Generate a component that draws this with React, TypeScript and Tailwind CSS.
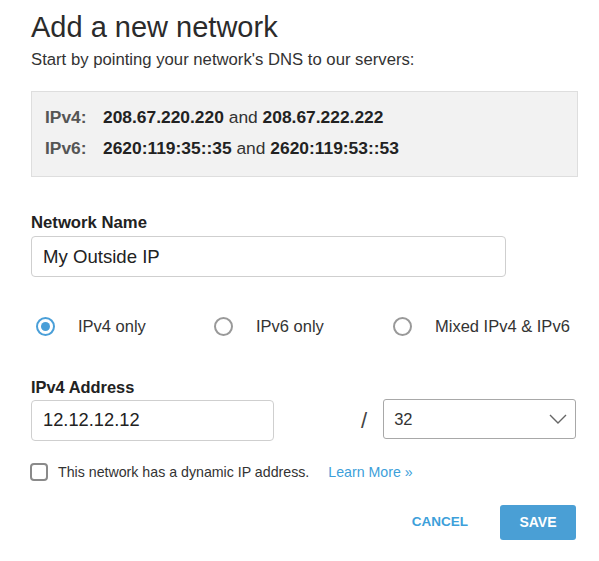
import React, { useState } from "react";

const App: React.FC = () => {
  const [mode, setMode] = useState("ipv4");
  const [dynamic, setDynamic] = useState(false);

  const modes = [
    { id: "ipv4", label: "IPv4 only", w: "w-[178px]" },
    { id: "ipv6", label: "IPv6 only", w: "w-[179px]" },
    { id: "mixed", label: "Mixed IPv4 & IPv6", w: "" },
  ];

  return (
    <div className="w-[599px] h-[561px] bg-white pl-[31px] pr-[21px] pt-[8px] text-[#333] font-['Liberation_Sans',Arial,sans-serif]">
      {/* Header */}
      <h1 className="text-[29px] leading-[38px] text-[#2b2b2b]">Add a new network</h1>
      <p className="text-[16.7px] leading-[20px] mt-[4px] text-[#333]">
        Start by pointing your network's DNS to our servers:
      </p>

      {/* DNS box */}
      <div className="mt-[21px] h-[86px] bg-[#f2f2f2] border border-[#dedede] pl-[13px] pt-[15px] text-[17.4px] leading-[21px]">
        <div className="flex">
          <span className="w-[58px] font-bold text-[#555]">IPv4:</span>
          <span>
            <b className="text-[#222]">208.67.220.220</b> and <b className="text-[#222]">208.67.222.222</b>
          </span>
        </div>
        <div className="flex mt-[10px]">
          <span className="w-[58px] font-bold text-[#555]">IPv6:</span>
          <span>
            <b className="text-[#222]">2620:119:35::35</b> and <b className="text-[#222]">2620:119:53::53</b>
          </span>
        </div>
      </div>

      {/* Network name */}
      <label className="block mt-[36px] text-[16.7px] leading-[20px] font-bold text-[#222]">Network Name</label>
      <input
        defaultValue="My Outside IP"
        className="mt-[3px] w-[475px] h-[41px] border border-[#cfcfcf] rounded-[4px] px-[11px] text-[18.6px] text-[#222] outline-none"
      />

      {/* Radios */}
      <div className="flex items-center mt-[37px] pl-[5px]">
        {modes.map((m) => (
          <button
            key={m.id}
            onClick={() => setMode(m.id)}
            className={`flex items-center gap-[23px] text-[16.5px] text-[#333] ${m.w}`}
          >
            {mode === m.id ? (
              <span className="w-[19px] h-[19px] rounded-full border-[2px] border-[#4a9fd8] flex items-center justify-center">
                <span className="w-[9px] h-[9px] rounded-full bg-[#4a9fd8]" />
              </span>
            ) : (
              <span className="w-[19px] h-[19px] rounded-full border-[2px] border-[#999]" />
            )}
            {m.label}
          </button>
        ))}
      </div>

      {/* IPv4 address */}
      <label className="block mt-[38px] text-[16.4px] leading-[20px] font-bold text-[#222]">IPv4 Address</label>
      <div className="flex items-center mt-[3px]">
        <input
          defaultValue="12.12.12.12"
          className="w-[243px] h-[41px] border border-[#cfcfcf] rounded-[4px] px-[11px] text-[18.3px] text-[#222] outline-none"
        />
        <span className="ml-[87px] text-[22px] text-[#444]">/</span>
        <div className="ml-[16px] w-[193px] h-[40px] border border-[#a8a8a8] rounded-[3px] flex items-center justify-between pl-[10px] pr-[8px] text-[16.5px] text-[#333] -mt-[2px]">
          <span>32</span>
          <svg width="18" height="10" viewBox="0 0 18 10" fill="none">
            <path d="M1 1l8 8 8-8" stroke="#666" strokeWidth="1.4" />
          </svg>
        </div>
      </div>

      {/* Dynamic IP */}
      <div className="flex items-center mt-[21px] text-[14.2px]">
        <button
          onClick={() => setDynamic(!dynamic)}
          className={`w-[18px] h-[18px] -ml-[1px] rounded-[4px] border-[2px] border-[#8a8a8a] ${dynamic ? "bg-[#4a9fd8]" : "bg-white"}`}
        />
        <span className="ml-[10px] text-[#333]">This network has a dynamic IP address.</span>
        <a href="#" className="ml-[19px] text-[#3d9fda]">Learn More »</a>
      </div>

      {/* Actions */}
      <div className="flex items-center justify-end mt-[22px] pr-[2px]">
        <button className="text-[13.5px] font-bold text-[#3d9fda] mr-[32px]">CANCEL</button>
        <button className="w-[76px] h-[35px] rounded-[3px] bg-[#4a9fd5] text-white text-[14px] font-bold">SAVE</button>
      </div>
    </div>
  );
};

export default App;
